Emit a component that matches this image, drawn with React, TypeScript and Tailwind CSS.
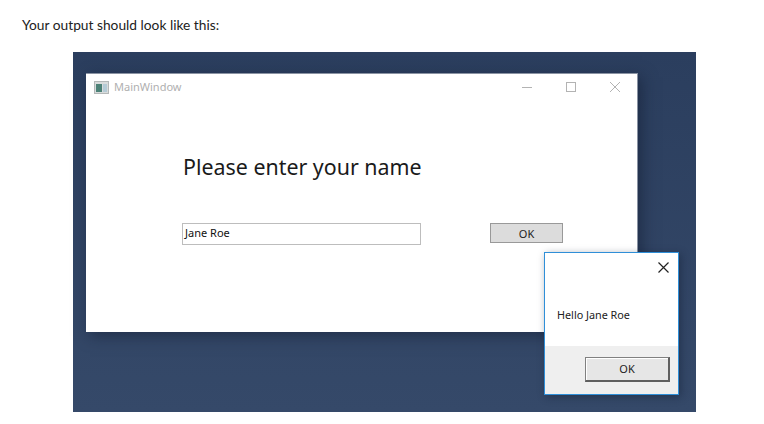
const App = () => {
  return (
    <div className="w-[764px] h-[424px] bg-white overflow-hidden [font-family:'Noto_Sans',sans-serif]">
      <p className="pl-[22px] pt-[16px] h-[52px] text-[13.75px] leading-[18px] text-[#222] [font-family:Lato,sans-serif]">
        Your output should look like this:
      </p>

      {/* Desktop */}
      <div className="relative ml-[73px] w-[623px] h-[360px] bg-gradient-to-b from-[#2b3e5e] to-[#354969]">
        {/* Main window */}
        <div className="absolute left-[13px] top-[21px] w-[552px] h-[259px] bg-white border-t border-r border-[#8a93a3] shadow-[4px_4px_14px_rgba(15,25,45,0.5)] flex flex-col">
          <div className="h-[26px] flex items-center pl-[8px] shrink-0">
            <svg width="15" height="13" viewBox="0 0 15 13" className="mr-[5px]">
              <rect x="0.5" y="0.5" width="14" height="12" fill="#d9dcdc" stroke="#b4b8b8" />
              <rect x="2" y="3" width="6" height="8" fill="#4d8277" />
              <rect x="9" y="3" width="4" height="8" fill="#b5cbd6" />
            </svg>
            <span className="text-[11px] text-[#b0b0b0]">MainWindow</span>
            <div className="ml-auto flex items-center text-[#b3b3b3]">
              <svg width="12" height="12" viewBox="0 0 12 12" className="mr-[32px]">
                <path d="M1 6.5h10" stroke="currentColor" strokeWidth="1" />
              </svg>
              <svg width="12" height="12" viewBox="0 0 12 12" className="mr-[32px]">
                <rect x="1.5" y="1.5" width="9" height="9" fill="none" stroke="currentColor" />
              </svg>
              <svg width="12" height="12" viewBox="0 0 12 12" className="mr-[16px]">
                <path d="M1 1l10 10M11 1L1 11" stroke="currentColor" strokeWidth="1" />
              </svg>
            </div>
          </div>
          <div className="pl-[96px] pr-[74px] flex flex-col">
            <h1 className="mt-[49px] pl-px text-[21.4px] leading-[36px] text-[#1a1a1a]">Please enter your name</h1>
            <div className="mt-[38px] flex items-start justify-between">
              <div className="w-[239px] h-[22px] border border-[#bdbdbd] pl-[2px] text-[11px] leading-[18px] text-[#111]">
                Jane Roe
              </div>
              <div className="w-[73px] h-[20px] border border-[#999] bg-[#dcdcdc] text-center text-[11px] leading-[19px] text-[#222]">
                OK
              </div>
            </div>
          </div>
        </div>

        {/* Message box */}
        <div className="absolute left-[471px] top-[200px] w-[135px] h-[143px] bg-white border border-[#2f8fd8] shadow-[2px_2px_8px_rgba(15,25,45,0.4)] flex flex-col">
          <div className="flex justify-end pt-[9px] pr-[9px] h-[38px] shrink-0 text-[#222]">
            <svg width="11" height="11" viewBox="0 0 11 11">
              <path d="M0.5 0.5l10 10M10.5 0.5l-10 10" stroke="currentColor" strokeWidth="1.2" />
            </svg>
          </div>
          <p className="pl-[12px] pt-[16px] h-[55px] shrink-0 text-[10.8px] leading-[16px] text-[#222]">Hello Jane Roe</p>
          <div className="flex-1 bg-[#efefef] flex justify-end pt-[11px] pr-[8px]">
            <div className="w-[85px] h-[25px] bg-[#e6e6e6] border border-[#808080] border-r-2 border-b-2 border-r-[#5f5f5f] border-b-[#5f5f5f] shadow-[inset_1px_1px_0_#fff] text-center text-[11px] leading-[22px] text-[#222]">
              OK
            </div>
          </div>
        </div>
      </div>
    </div>
  );
};

export default App;
